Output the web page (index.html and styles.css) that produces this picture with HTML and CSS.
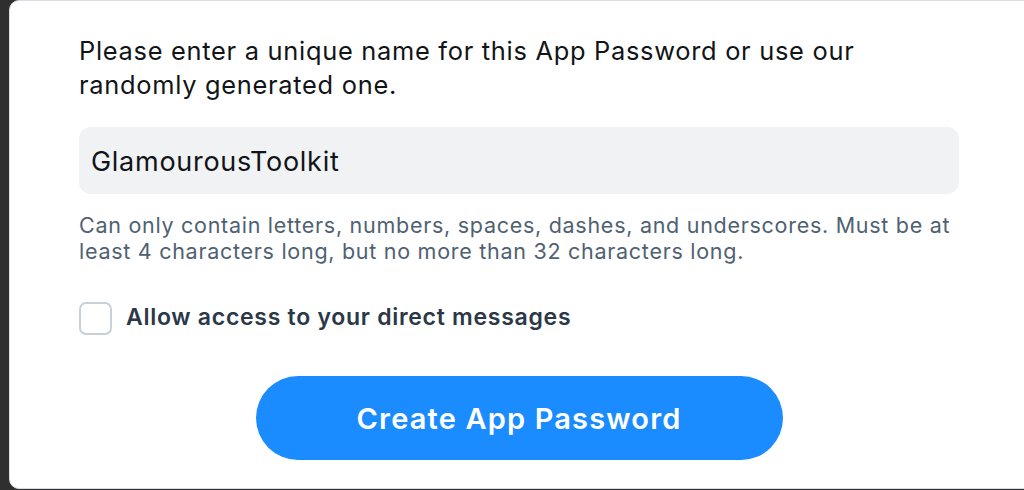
FILE: index.html
```html
<!DOCTYPE html>
<html lang="en">
<head>
<meta charset="utf-8">
<link rel="stylesheet" href="styles.css">
</head>
<body>
  <div class="card">
    <div class="content">
      <p class="intro">Please enter a unique name for this App Password or use our randomly generated one.</p>
      <div class="input">GlamourousToolkit</div>
      <p class="hint">Can only contain letters, numbers, spaces, dashes, and underscores. Must be at least 4 characters long, but no more than 32 characters long.</p>
      <label class="check">
        <span class="box"></span>
        <span class="check-label">Allow access to your direct messages</span>
      </label>
      <div class="actions">
        <button class="btn">Create App Password</button>
      </div>
    </div>
  </div>
</body>
</html>
```
FILE: styles.css
```css
html, body {
  margin: 0;
  padding: 0;
  height: 100%;
  overflow: hidden;
}
body {
  background: #2f2f2f;
  font-family: Inter, "Noto Sans", sans-serif;
  padding-left: 9px;
  box-sizing: border-box;
}
.card {
  background: #ffffff;
  border: 1px solid #d6dde4;
  border-radius: 10px;
  width: 1030px;
  height: 489px;
  box-sizing: border-box;
  overflow: hidden;
}
.content {
  width: 880px;
  padding: 33px 0 0 69px;
  letter-spacing: 0.045em;
}
.intro {
  margin: 0;
  font-size: 25.4px;
  line-height: 34px;
  color: #111418;
}
.input {
  margin-top: 25px;
  height: 67px;
  background: #f1f2f4;
  border-radius: 12px;
  display: flex;
  align-items: center;
  padding-left: 12px;
  padding-top: 2px;
  box-sizing: border-box;
  font-size: 27px;
  color: #111418;
}
.hint {
  margin: 18px 0 0;
  font-size: 21.5px;
  line-height: 26px;
  color: #4f6172;
}
.check {
  display: flex;
  align-items: center;
  gap: 14px;
  margin-top: 38px;
}
.box {
  width: 33px;
  height: 33px;
  border: 2px solid #c8d0da;
  border-radius: 7px;
  box-sizing: border-box;
  flex: none;
}
.check-label {
  font-size: 23px;
  font-weight: 600;
  color: #2a3848;
  margin-top: -3px;
}
.actions {
  display: flex;
  justify-content: center;
  margin-top: 41px;
}
.btn {
  width: 527px;
  height: 84px;
  border: none;
  border-radius: 42px;
  background: #1a8cff;
  color: #ffffff;
  font-family: Inter, "Noto Sans", sans-serif;
  font-size: 29px;
  font-weight: 600;
  letter-spacing: 0.04em;
}
```
